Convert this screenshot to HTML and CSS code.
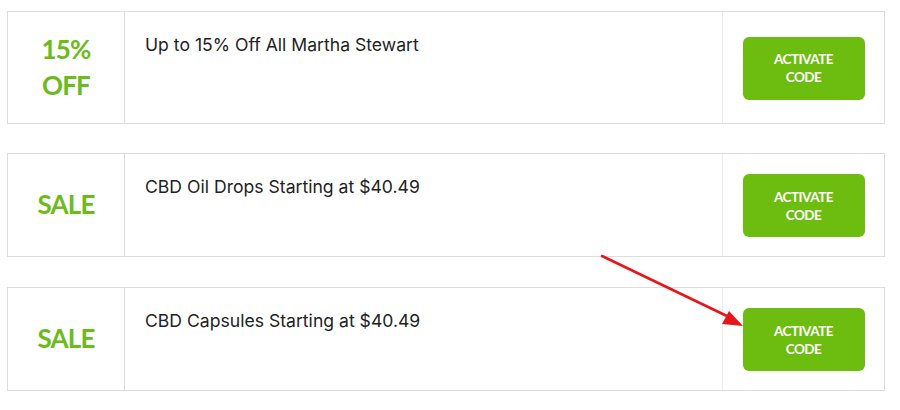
FILE: index.html
```html
<!DOCTYPE html>
<html lang="en">
<head>
    <meta charset="UTF-8">
    <meta name="viewport" content="width=device-width, initial-scale=1.0">
    <title>Martha Stewart CBD Coupons</title>
    <link rel="stylesheet" href="styles.css">
</head>
<body>

    <div class="coupon-list">
        <div class="coupon">
            <div class="coupon-badge">15%<br>OFF</div>
            <div class="coupon-title">Up to 15% Off All Martha Stewart</div>
            <div class="coupon-action">
                <a href="#" class="activate-btn">Activate<br>Code</a>
            </div>
        </div>

        <div class="coupon">
            <div class="coupon-badge">SALE</div>
            <div class="coupon-title">CBD Oil Drops Starting at $40.49</div>
            <div class="coupon-action">
                <a href="#" class="activate-btn">Activate<br>Code</a>
            </div>
        </div>

        <div class="coupon">
            <div class="coupon-badge">SALE</div>
            <div class="coupon-title">CBD Capsules Starting at $40.49</div>
            <div class="coupon-action">
                <a href="#" class="activate-btn">Activate<br>Code</a>
            </div>
        </div>

        <!-- annotation arrow pointing at the last button -->
        <svg class="pointer-arrow" width="160" height="90" viewBox="0 0 160 90">
            <line x1="5" y1="5" x2="132" y2="66" stroke="#e8151b" stroke-width="2.6" stroke-linecap="round"/>
            <polygon points="146,75 125,73 132,60" fill="#e8151b"/>
        </svg>
    </div>

</body>
</html>
```

FILE: styles.css
```css
body {
    margin: 0;
    background-color: #fff;
    font-family: Inter, "Noto Sans", sans-serif;
}

.coupon-list {
    position: relative;
    width: 878px;
    padding: 11px 0 0 7px;
}

.coupon {
    display: flex;
    border: 1px solid #dcdcdc;
    margin-bottom: 29px;
}

.coupon:nth-child(2) {
    margin-bottom: 30px;
}

.coupon-badge {
    width: 116px;
    flex-shrink: 0;
    border-right: 1px solid #dcdcdc;
    display: flex;
    align-items: center;
    justify-content: center;
    text-align: center;
    padding: 20px 0;
    font-family: Lato, "Open Sans", sans-serif;
    font-size: 26px;
    font-weight: 700;
    line-height: 35.5px;
    color: #6cbb1c;
    letter-spacing: -0.8px;
}

.coupon-title {
    flex: 1;
    padding: 22px 20px 0 20px;
    font-size: 17.6px;
    color: #222;
}

.coupon-action {
    width: 161px;
    flex-shrink: 0;
    border-left: 1px solid #ededed;
    display: flex;
    align-items: center;
    justify-content: center;
    padding: 20px 0 19px;
}

.activate-btn {
    display: flex;
    align-items: center;
    justify-content: center;
    width: 122px;
    height: 63px;
    background-color: #6dbd10;
    border-radius: 6px;
    color: #fff;
    text-decoration: none;
    text-align: center;
    text-transform: uppercase;
    font-family: Lato, "Open Sans", sans-serif;
    font-weight: 700;
    font-size: 13.5px;
    line-height: 18px;
    letter-spacing: -0.5px;
}

.pointer-arrow {
    position: absolute;
    left: 597px;
    top: 251px;
}
```
